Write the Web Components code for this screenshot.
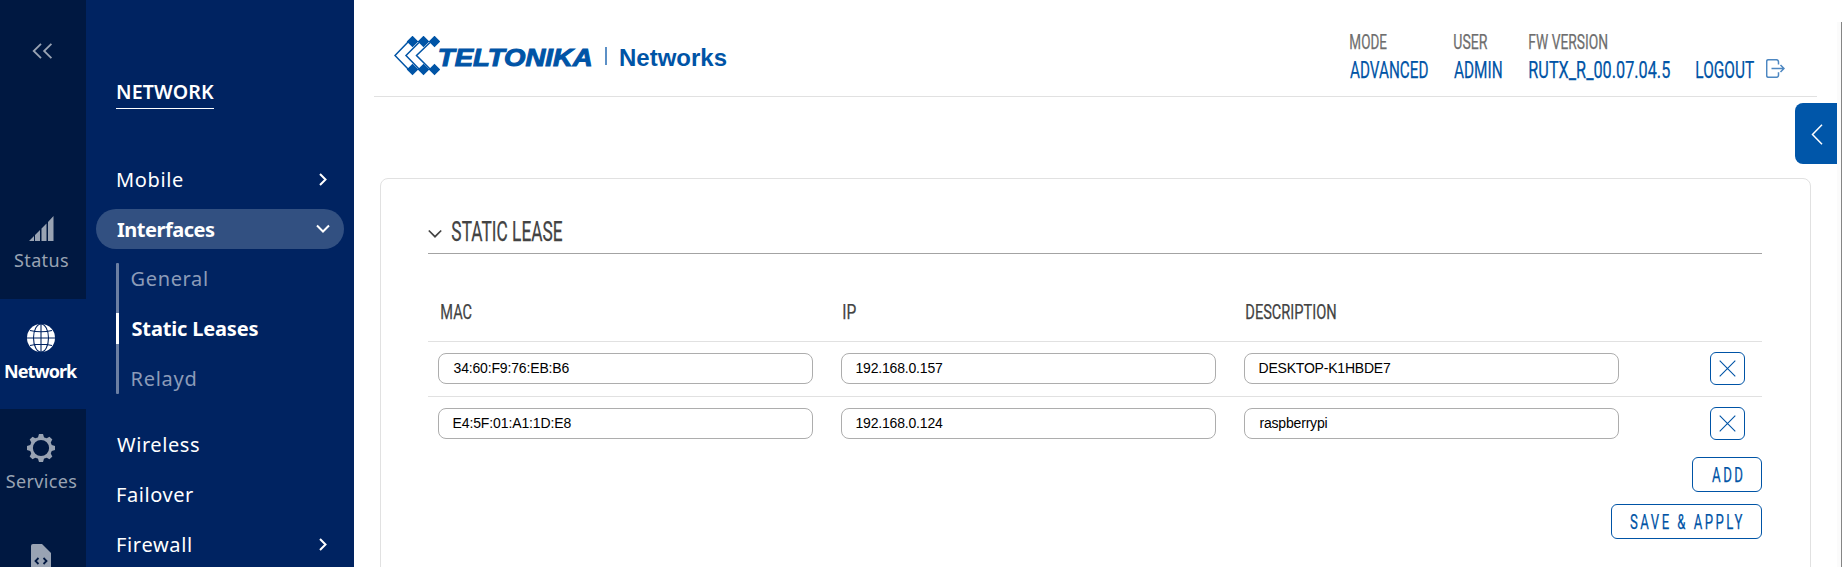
<!DOCTYPE html>
<html lang="en">
<head>
<meta charset="utf-8">
<title>Static Leases</title>
<style>
html,body{margin:0;height:100%;overflow:hidden;background:#fff}
</style>
</head>
<body>
<router-app></router-app>
<script>
const ctx = document.createElement('canvas').getContext('2d');
const FACES = {
  noto: ['"Noto Sans", sans-serif', .714],
  cond: ['Roboto, sans-serif', .711],
  arial: ['"Liberation Sans", Arial, sans-serif', .7]
};
function define(name, html, setup) {
  const t = document.createElement('template');
  t.innerHTML = html;
  customElements.define(name, class extends HTMLElement {
    constructor() { super(); this.attachShadow({mode: 'open'}).append(t.content.cloneNode(true)); }
    connectedCallback() { if (setup) setup(this, this.shadowRoot); }
  });
}

/* A line of text whose box is its own ink: "w" wide and "cap" tall, baseline on the bottom edge. */
define('fit-text', `<style>
:host{display:block;flex:none}
span{display:block;white-space:pre;transform-origin:0 0}
</style><span><slot></slot></span>`, (el, root) => {
  const a = (n, d) => el.getAttribute(n) ?? d;
  const text = el.textContent, w = +a('w'), cap = +a('cap');
  const face = a('face', 'noto');
  const [family, ratio] = FACES[face];
  const size = +a('size', cap / ratio), weight = a('weight', '400'), style = a('slant', 'normal');
  const ls = +a('spacing', 0);
  ctx.font = `${style} ${weight} ${size}px ${family}`;
  const m = ctx.measureText(text);
  const ink = m.actualBoundingBoxRight + m.actualBoundingBoxLeft + ls * (text.length - 1);
  const s = root.querySelector('span').style;
  el.style.width = w + 'px';
  el.style.height = cap + 'px';
  s.font = `${style} ${weight} ${size}px/${cap}px ${family}`;
  if (face === 'cond') s.webkitTextStroke = '.25px currentColor';
  const A = Math.round(m.fontBoundingBoxAscent), D = Math.round(m.fontBoundingBoxDescent);
  const dy = cap - Math.floor((cap - A - D) / 2) - A;
  const start = -m.actualBoundingBoxLeft;
  if (el.hasAttribute('squeeze')) {
    const k = w / ink;
    s.letterSpacing = ls + 'px';
    s.transform = `translate(${-start * k}px,${dy}px) scaleX(${k})`;
  } else {
    s.letterSpacing = (w - ink) / (text.length - 1) + 'px';
    s.marginLeft = -start + 'px';
    s.position = 'relative';
    s.top = dy + 'px';
  }
});

define('rail-item', `<style>
:host{display:flex;flex-direction:column;align-items:center;box-sizing:border-box;height:110px;flex:none;padding:25px 4px 0 0;color:#99a3b3}
:host([active]){background:#002361;color:#fff}
.i{height:28px;display:flex;align-items:center;margin-bottom:13px}
</style><div class="i"><slot name="icon"></slot></div><slot></slot>`);

define('menu-item', `<style>
:host{display:block;height:50px;padding:5px 10px;box-sizing:border-box;color:#fff}
div{height:40px;border-radius:20px;display:flex;align-items:center;justify-content:space-between;padding:0 15px 0 21px;box-sizing:border-box}
:host([open]) div{background:#325081}
svg{display:none;fill:none;stroke:#fff;stroke-width:2}
:host([arrow]) .r,:host([open]) .d{display:block}
::slotted(*){margin-top:2px}
.r{margin-right:1px}
.d{margin-right:-1px}
</style><div><slot></slot>
<svg class="r" width="10" height="13"><path d="M2 1l5.5 5.5L2 12"/></svg>
<svg class="d" width="14" height="10"><path d="M1 1.5l6 6 6-6"/></svg></div>`);

define('sub-item', `<style>
:host{display:flex;align-items:center;height:50px;padding-left:12.500px;margin-left:3px;color:#8c9bb8}
:host([active]){color:#fff}
</style><slot></slot>`);

define('sub-menu', `<style>
:host{display:block;position:relative;margin:0 0 15px 30px}
i{position:absolute;left:0;top:9px;width:3px;height:131px;background:#6b7fa3;border-radius:1px}
b{position:absolute;left:0;top:59px;width:3px;height:31px;background:#fff}
</style><i></i><b></b><slot></slot>`);

define('brand-logo', `<style>
:host{display:flex;align-items:flex-start;color:#0054a6;height:40px}
svg{flex:none}
.t{margin:13px 0 0 0}
.x{-webkit-text-stroke:1px #0054a6;margin-left:-1px}
.bar{width:2px;height:18px;background:#5c90c6;margin:11px 13px 0 14px}
</style>
<svg width="46" height="40" viewBox="0 0 46 40"><g fill="#0054a6">
<path d="M18.500-.3l5.800 5.800-5.800 5.800-5.800-5.800zM29.500-.3l5.800 5.800-5.800 5.800-5.800-5.800zM40.500-.3l5.800 5.800-5.800 5.800-5.800-5.800zM18.500 27.700l5.800 5.800-5.800 5.800-5.800-5.800zM29.500 27.700l5.800 5.800-5.800 5.800-5.800-5.800zM40.500 27.700l5.800 5.800-5.800 5.800-5.800-5.800z"/></g>
<g fill="none" stroke="#0054a6" stroke-width="1.500"><path d="M15 5L1 19.500 15 34M25 6.500L12 19.500 25.500 33.500M36 6.500L22.500 19.500 36.500 33.500"/></g></svg>
<fit-text class="t x" face="arial" weight="700" slant="italic" squeeze w="152" cap="17">TELTONIKA</fit-text>
<div class="bar"></div>
<fit-text class="t" face="arial" weight="700" squeeze w="106.500" cap="17">Networks</fit-text>`);

define('info-pair', `<style>
:host{display:flex;flex-direction:column;gap:12px}
.a{color:#6e6e6e}.b{color:#0054a6}
</style><div class="a"><slot name="label"></slot></div><div class="b"><slot></slot></div>`);

define('text-box', `<style>
:host{display:flex;align-items:flex-start;box-sizing:border-box;width:375px;height:31px;border:1px solid #adadad;border-radius:8px;padding:9px 0 0 14.500px;color:#000}
</style><slot></slot>`);

define('line-button', `<style>
:host{display:flex;align-items:center;justify-content:center;box-sizing:border-box;height:35px;border:1px solid #0054a6;border-radius:6px;color:#0054a6;background:#fff}
</style><slot></slot>`);

define('lease-row', `<style>
:host{display:grid;grid-template-columns:403px 403px 1fr auto;align-items:start;box-sizing:border-box;height:55px;border-top:1px solid #e1e1e1;padding:11px 17px 0 10px}
line-button{width:35px;height:33px;margin-top:-1px}
svg{fill:none;stroke:#0054a6;stroke-width:1.100}
</style>
<slot name="mac"></slot><slot name="ip"></slot><slot name="desc"></slot>
<line-button><svg width="17" height="17"><path d="M.7.700l15.600 15.600M16.300.700L.7 16.300"/></svg></line-button>`);

define('lease-panel', `<style>
:host{display:block;box-sizing:border-box;margin:81px 0 0 6px;width:1431px;height:420px;border:1px solid #e1e1e1;border-radius:8px;padding:43px 48px 0 47px;color:#434343}
.h{display:flex;align-items:flex-start;height:31px;border-bottom:1px solid #a3a3a3;gap:10px}
.h svg{margin-top:7px}
.c{display:grid;grid-template-columns:402.500px 403px 1fr;padding:50px 0 22px 12.500px}
.f{display:flex;flex-direction:column;align-items:flex-end;gap:12px;padding-top:6px}
</style>
<div class="h"><svg width="14" height="10" fill="none" stroke="#434343" stroke-width="1.700"><path d="M.8 1.500L7 7.700l6.200-6.200"/></svg>
<fit-text face="cond" squeeze w="110.500" cap="19">STATIC LEASE</fit-text></div>
<div class="c"><fit-text face="cond" squeeze w="30.500" cap="15">MAC</fit-text><fit-text face="cond" squeeze w="13" cap="15">IP</fit-text><fit-text face="cond" squeeze w="90" cap="15">DESCRIPTION</fit-text></div>
<lease-row>
<text-box slot="mac"><fit-text face="arial" size="14" w="116" cap="10">34:60:F9:76:EB:B6</fit-text></text-box>
<text-box slot="ip"><fit-text face="arial" size="14" w="86.500" cap="10">192.168.0.157</fit-text></text-box>
<text-box slot="desc"><fit-text face="arial" size="14" w="131.500" cap="10">DESKTOP-K1HBDE7</fit-text></text-box>
</lease-row>
<lease-row>
<text-box slot="mac"><fit-text face="arial" size="14" w="118" cap="10">E4:5F:01:A1:1D:E8</fit-text></text-box>
<text-box slot="ip"><fit-text face="arial" size="14" w="86.500" cap="10">192.168.0.124</fit-text></text-box>
<text-box slot="desc"><fit-text face="arial" size="14" w="68" cap="10">raspberrypi</fit-text></text-box>
</lease-row>
<div class="f">
<line-button style="width:70px"><fit-text face="cond" squeeze spacing="4" w="30.500" cap="15">ADD</fit-text></line-button>
<line-button style="width:151px"><fit-text face="cond" squeeze spacing="4" w="112.500" cap="15">SAVE &amp; APPLY</fit-text></line-button>
</div>`);

define('side-rail', `<style>
:host{display:flex;flex-direction:column;width:86px;flex:none;background:#001841;overflow:hidden}
.t{height:189px;flex:none;padding:43px 0 0 32px;box-sizing:border-box}
svg{display:block}
</style>
<div class="t"><svg width="21" height="16" fill="none" stroke="#99a3b3" stroke-width="1.800"><path d="M9 .8L1.700 8 9 15.200M19.400.8L12.100 8l7.300 7.200"/></svg></div>
<rail-item><svg slot="icon" width="26" height="28" fill="#99a3b3"><path d="M1 27l5-5v5zM7 21l5-5v11H7zM13.500 14.500l5-5V27h-5zM20 8l5.500-6v25H20z"/></svg><fit-text w="54" cap="12" size="18">Status</fit-text></rail-item>
<rail-item active><svg slot="icon" width="28" height="28"><circle cx="14" cy="14" r="14" fill="#fff"/><g fill="none" stroke="#002361" stroke-width="1.100"><ellipse cx="14" cy="14" rx="7.500" ry="14"/><path d="M14 0v28M0 14h28M3 6.500q11 2.500 22 0M3 21.500q11-2.500 22 0"/></g></svg><fit-text w="73" cap="13" weight="700" size="18" style="margin-left:1px">Network</fit-text></rail-item>
<rail-item><svg slot="icon" width="28" height="28" viewBox="-14 -14 28 28"><circle r="9.600" fill="none" stroke="#99a3b3" stroke-width="3"/><g id="g" fill="#99a3b3"></g></svg><fit-text w="70.500" cap="13" size="18">Services</fit-text></rail-item>
<rail-item><svg slot="icon" width="20" height="28" fill="#99a3b3"><path d="M2 0h9l9 9v19H0V2a2 2 0 0 1 2-2z"/><path d="M7.500 14L4.500 17l3 3M12.500 14l3 3-3 3" fill="none" stroke="#001841" stroke-width="1.800"/></svg></rail-item>`, (el, root) => {
  root.querySelector('#g').innerHTML = [0,45,90,135,180,225,270,315].map(r => `<path transform="rotate(${r})" d="M-3.200-10L-2-14H2L3.200-10z"/>`).join('');
});

define('side-menu', `<style>
:host{display:flex;flex-direction:column;width:268px;flex:none;background:#002361;overflow:hidden;color:#fff}
.t{box-sizing:border-box;height:154px;flex:none;padding:85px 0 0 30px}
.u{width:98px;border-bottom:1px solid #fff;padding:0 0 9px 1px;box-sizing:border-box}
menu-item{flex:none}
</style>
<div class="t"><div class="u"><fit-text w="97" cap="14" weight="600">NETWORK</fit-text></div></div>
<menu-item arrow><fit-text w="66" cap="14" size="20">Mobile</fit-text></menu-item>
<menu-item open><fit-text w="98" cap="14" size="20" weight="700">Interfaces</fit-text></menu-item>
<sub-menu><sub-item><fit-text w="75.500" cap="14" size="20">General</fit-text></sub-item><sub-item active><fit-text w="127" cap="14" size="20" weight="700">Static Leases</fit-text></sub-item><sub-item><fit-text w="64" cap="14" size="20">Relayd</fit-text></sub-item></sub-menu>
<menu-item><fit-text w="82" cap="14" size="20">Wireless</fit-text></menu-item>
<menu-item><fit-text w="76" cap="14" size="20">Failover</fit-text></menu-item>
<menu-item arrow><fit-text w="74" cap="14" size="20">Firewall</fit-text></menu-item>`);

define('top-bar', `<style>
:host{display:flex;justify-content:space-between;align-items:flex-start;box-sizing:border-box;width:1443px;height:97px;border-bottom:1px solid #e1e1e1;padding:34px 32px 0 20px}
brand-logo{margin-top:2px}
.r{display:flex;align-items:flex-start}
.out{display:flex;align-items:flex-start;gap:12px;margin:27px 0 0 26px;color:#0054a6}
.out svg{margin-top:-2px}
</style>
<brand-logo></brand-logo>
<div class="r">
<info-pair style="width:104px"><fit-text slot="label" face="cond" squeeze w="37" cap="15">MODE</fit-text><fit-text face="cond" squeeze w="78" cap="17">ADVANCED</fit-text></info-pair>
<info-pair style="width:75px"><fit-text slot="label" face="cond" squeeze w="33.500" cap="15">USER</fit-text><fit-text face="cond" squeeze w="48" cap="17">ADMIN</fit-text></info-pair>
<info-pair style="width:141px"><fit-text slot="label" face="cond" squeeze w="78.500" cap="15">FW VERSION</fit-text><fit-text face="cond" squeeze w="141" cap="17">RUTX_R_00.07.04.5</fit-text></info-pair>
<div class="out"><fit-text face="cond" squeeze w="58" cap="17">LOGOUT</fit-text>
<svg width="19" height="19" fill="none" stroke="#4d87c1" stroke-width="1.500"><path d="M12.500 5.500V3q0-2.300-2-2.300H2.500Q.7.700.7 2.500v14q0 1.800 1.800 1.800h8q2 0 2-2v-3M5.500 9.500h12.500M14.500 6l3.500 3.500-3.500 3.500"/></svg></div>
</div>`);

define('side-tab', `<style>
:host{position:absolute;right:5px;top:103px;width:42px;height:61px;border-radius:8px 0 0 8px;background:#0056a9;display:flex;align-items:center;justify-content:center}
svg{margin:1px 0 0 2px}
</style><svg width="12" height="21" fill="none" stroke="#fff" stroke-width="1.500"><path d="M11 .8L1.500 10.500 11 20.200"/></svg>`);

define('router-app', `<style>
:host{display:flex;height:100vh;overflow:hidden;position:relative}
main{flex:1;min-width:0;padding-left:20px}
.edge{width:4px;background:#fbfbfb;border-right:1px solid #858585;margin-top:22px}
</style><side-rail></side-rail><side-menu></side-menu><main><top-bar></top-bar><lease-panel></lease-panel></main><div class="edge"></div><side-tab></side-tab>`);
</script>
</body>
</html>
